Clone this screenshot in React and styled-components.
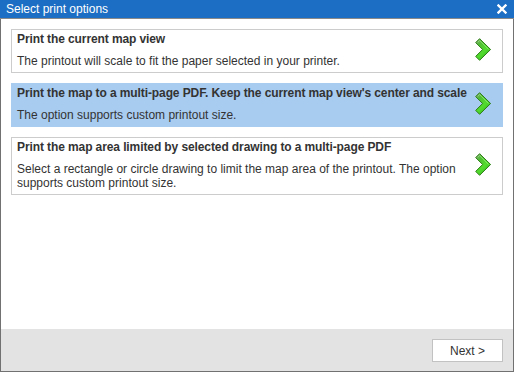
import React from "react";
import styled, { createGlobalStyle } from "styled-components";

const GlobalStyle = createGlobalStyle`
	html, body {
		margin: 0;
		padding: 0;
		background: #ffffff;
	}
	body {
		font-family: "Liberation Sans", Arial, sans-serif;
		font-size: 12px;
	}
`;

const Dialog = styled.div`
	width: 514px;
	height: 372px;
	box-sizing: border-box;
	border: 1px solid #717171;
	border-top: none;
	display: flex;
	flex-direction: column;
	background: #ffffff;
`;

const TitleBar = styled.div`
	height: 18px;
	margin: 0 -1px;
	padding: 0 6px 0 6px;
	background: #1b6ec3;
	border-bottom: 1px solid #8a8a8a;
	display: flex;
	align-items: center;
	justify-content: space-between;
	color: #ffffff;
	font-size: 12px;
	line-height: 18px;
`;

const CloseButton = styled.button`
	border: none;
	background: none;
	padding: 0;
	margin-right: 1px;
	width: 10px;
	height: 10px;
	display: flex;
	cursor: pointer;
`;

const Content = styled.div`
	flex: 1;
	padding: 10px;
	display: flex;
	flex-direction: column;
	gap: 10px;
`;

const Option = styled.div`
	border: 1px solid ${(p) => (p.selected ? "#a8cbf0" : "#cccccc")};
	background: ${(p) => (p.selected ? "#a8cbf0" : "#ffffff")};
	padding: 1px 10px 4px 5px;
	display: flex;
	align-items: center;
	color: #333333;
	cursor: pointer;
`;

const OptionText = styled.div`
	flex: 1;
	min-width: 0;
	padding-top: 1px;
	padding-right: 2px;
`;

const OptionTitle = styled.div`
	font-weight: bold;
	line-height: 14px;
	margin-bottom: 8px;
	white-space: nowrap;
	letter-spacing: -0.1px;
`;

const OptionDesc = styled.div`
	line-height: 14px;
`;

const Footer = styled.div`
	height: 42px;
	box-sizing: border-box;
	background: #e3e3e3;
	padding: 10px 10px 0;
	display: flex;
	justify-content: flex-end;
	align-items: flex-start;
`;

const NextButton = styled.button`
	width: 71px;
	height: 23px;
	background: #ffffff;
	border: 1px solid #c2c2c2;
	font-family: "Liberation Sans", Arial, sans-serif;
	font-size: 12px;
	color: #333333;
	padding: 0;
	cursor: pointer;
`;

function Chevron() {
	return (
		<svg width="17" height="23" viewBox="0 0 17 23">
			<defs>
				<linearGradient id="chev" x1="0" y1="0" x2="0.7" y2="1">
					<stop offset="0" stopColor="#8f9f84" />
					<stop offset="0.3" stopColor="#4fbf33" />
					<stop offset="0.65" stopColor="#52dc2e" />
					<stop offset="1" stopColor="#34b21e" />
				</linearGradient>
			</defs>
			<path
				d="M0.7 4.6 L4.6 0.7 L15.6 11.5 L4.6 22.3 L0.7 18.4 L7.6 11.5 Z"
				fill="url(#chev)"
				stroke="#2c7d16"
				strokeWidth="1"
				strokeLinejoin="round"
			/>
			<path d="M2.8 4.2 L4.6 2.5 L13.6 11.5" fill="none" stroke="#a8f08e" strokeWidth="0.9" opacity="0.7" />
		</svg>
	);
}

const options = [
	{
		title: "Print the current map view",
		desc: "The printout will scale to fit the paper selected in your printer."
	},
	{
		title: "Print the map to a multi-page PDF. Keep the current map view's center and scale",
		desc: "The option supports custom printout size.",
		selected: true
	},
	{
		title: "Print the map area limited by selected drawing to a multi-page PDF",
		desc: "Select a rectangle or circle drawing to limit the map area of the printout. The option supports custom printout size."
	}
];

export default function App() {
	return (
		<>
			<GlobalStyle />
			<Dialog>
				<TitleBar>
					<span>Select print options</span>
					<CloseButton aria-label="Close">
						<svg width="10" height="10" viewBox="0 0 10 10">
							<path d="M1.5 1.5 L8.5 8.5 M8.5 1.5 L1.5 8.5" stroke="#ffffff" strokeWidth="2.4" strokeLinecap="square" />
						</svg>
					</CloseButton>
				</TitleBar>
				<Content>
					{options.map((o) => (
						<Option key={o.title} selected={o.selected}>
							<OptionText>
								<OptionTitle>{o.title}</OptionTitle>
								<OptionDesc>{o.desc}</OptionDesc>
							</OptionText>
							<Chevron />
						</Option>
					))}
				</Content>
				<Footer>
					<NextButton>Next &gt;</NextButton>
				</Footer>
			</Dialog>
		</>
	);
}
